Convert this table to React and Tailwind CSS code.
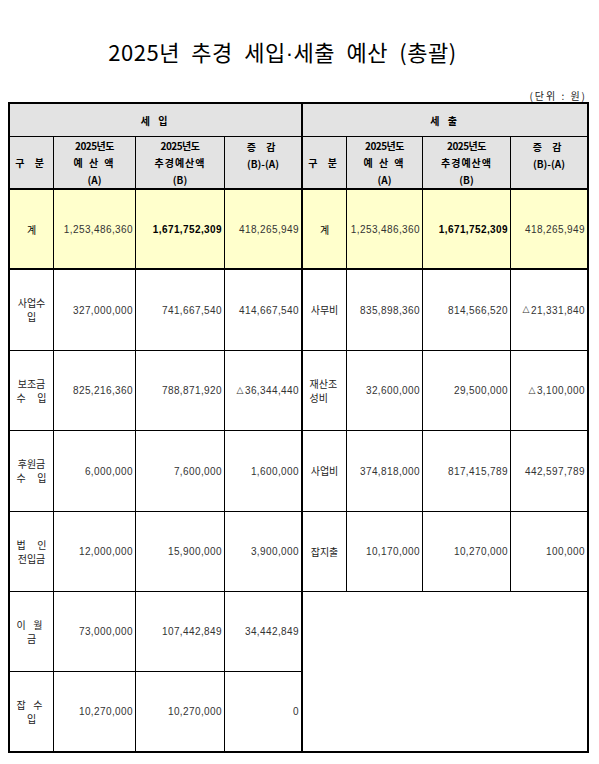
import React from "react";

const KR = { fontFamily: '"Noto Sans CJK KR", "Noto Sans", sans-serif' };
const NUM = { fontFamily: '"Liberation Sans", "Noto Sans CJK KR", sans-serif' };
const TRI = { fontFamily: '"DejaVu Sans", sans-serif' };

function Head({ className, lines }) {
  return (
    <div className={`flex flex-col items-center justify-center bg-[#e3e3e3] text-[10px] font-bold leading-[17px] text-black ${className}`} style={KR}>
      {lines.map((l, i) => (
        <div key={i} className={l.cls || ""}>{l.t}</div>
      ))}
    </div>
  );
}

function Label({ className, lines, align = "center", narrow }) {
  return (
    <div className={`flex items-center justify-center text-[10px] leading-[14px] text-[#222] ${className}`} style={KR}>
      <div className="flex w-[30px] flex-col">
        {lines.map((l, i) => {
          if (Array.isArray(l)) {
            return (
              <div key={i} className={narrow ? "flex justify-between pr-[4px]" : "flex justify-between"}>
                {l.map((c, j) => <span key={j}>{c}</span>)}
              </div>
            );
          }
          return (
            <div key={i} className={align === "left" ? "text-left whitespace-nowrap" : "text-center whitespace-nowrap"}>{l}</div>
          );
        })}
      </div>
    </div>
  );
}

function Num({ className, v, bold }) {
  const neg = v.startsWith("△");
  const body = neg ? v.slice(1) : v;
  return (
    <div className={`flex items-center justify-end pr-[2px] text-[10px] tracking-[0.4px] ${bold ? "font-bold text-black" : "text-[#333]"} ${className}`} style={NUM}>
      {neg && <span className="mr-[1px] text-[9px]" style={TRI}>△</span>}
      <span>{body}</span>
    </div>
  );
}

const leftRows = [
  { label: ["사업수", "입"], a: "327,000,000", b: "741,667,540", c: "414,667,540" },
  { label: ["보조금", ["수", "입"]], a: "825,216,360", b: "788,871,920", c: "△36,344,440" },
  { label: ["후원금", ["수", "입"]], a: "6,000,000", b: "7,600,000", c: "1,600,000" },
  { label: [["법", "인"], "전입금"], a: "12,000,000", b: "15,900,000", c: "3,900,000" },
  { label: [["이", "월"], "금"], narrow: true, a: "73,000,000", b: "107,442,849", c: "34,442,849" },
  { label: [["잡", "수"], "입"], narrow: true, a: "10,270,000", b: "10,270,000", c: "0" },
];

const rightRows = [
  { label: ["사무비"], a: "835,898,360", b: "814,566,520", c: "△21,331,840" },
  { label: ["재산조", "성비"], align: "left", a: "32,600,000", b: "29,500,000", c: "△3,100,000" },
  { label: ["사업비"], a: "374,818,000", b: "817,415,789", c: "442,597,789" },
  { label: ["잡지출"], a: "10,170,000", b: "10,270,000", c: "100,000" },
];

export default function App() {
  const cells = [];
  cells.push(<Head key="h1" className="col-span-4 border-r-2 border-b border-black tracking-[3px]" lines={[{ t: "세 입" }]} />);
  cells.push(<Head key="h2" className="col-span-4 border-b border-black tracking-[3px]" lines={[{ t: "세 출" }]} />);
  ["L", "R"].forEach((s) => {
    const last = s === "R";
    cells.push(<Head key={s + "g"} className="border-r border-b-2 border-black" lines={[{ t: "구 분", cls: "tracking-[4px]" }]} />);
    cells.push(<Head key={s + "a"} className="border-r border-b-2 border-black" lines={[{ t: "2025년도", cls: "tracking-[-0.5px]" }, { t: "예 산 액", cls: "tracking-[2px]" }, { t: "(A)" }]} />);
    cells.push(<Head key={s + "b"} className="border-r border-b-2 border-black" lines={[{ t: "2025년도", cls: "tracking-[-0.5px]" }, { t: "추경예산액", cls: "tracking-[1px]" }, { t: "(B)" }]} />);
    cells.push(<Head key={s + "c"} className={last ? "border-b-2 border-black pb-[15px]" : "border-r-2 border-b-2 border-black pb-[15px]"} lines={[{ t: "증 감", cls: "tracking-[4px]" }, { t: "(B)-(A)" }]} />);
  });
  ["L", "R"].forEach((s) => {
    const last = s === "R";
    cells.push(
      <div key={s + "t"} className="flex items-center justify-center border-r border-b-2 border-black bg-[#ffffcc] text-[10px] text-black" style={KR}>계</div>
    );
    cells.push(<Num key={s + "ta"} className="border-r border-b-2 border-black bg-[#ffffcc]" v="1,253,486,360" />);
    cells.push(<Num key={s + "tb"} className="border-r border-b-2 border-black bg-[#ffffcc]" v="1,671,752,309" bold />);
    cells.push(<Num key={s + "tc"} className={last ? "border-b-2 border-black bg-[#ffffcc]" : "border-r-2 border-b-2 border-black bg-[#ffffcc]"} v="418,265,949" />);
  });
  leftRows.forEach((r, i) => {
    const lastRow = i === leftRows.length - 1;
    const b = lastRow ? "" : "border-b";
    cells.push(<Label key={"l" + i} className={`border-r border-black ${b}`} lines={r.label} narrow={r.narrow} />);
    cells.push(<Num key={"la" + i} className={`border-r border-black ${b}`} v={r.a} />);
    cells.push(<Num key={"lb" + i} className={`border-r border-black ${b}`} v={r.b} />);
    cells.push(<Num key={"lc" + i} className={`border-r-2 border-black ${b}`} v={r.c} />);
    if (i < rightRows.length) {
      const rr = rightRows[i];
      cells.push(<Label key={"r" + i} className="border-r border-b border-black" lines={rr.label} align={rr.align} />);
      cells.push(<Num key={"ra" + i} className="border-r border-b border-black" v={rr.a} />);
      cells.push(<Num key={"rb" + i} className="border-r border-b border-black" v={rr.b} />);
      cells.push(<Num key={"rc" + i} className="border-b border-black" v={rr.c} />);
    } else if (i === rightRows.length) {
      cells.push(<div key="empty" className="col-span-4 row-span-2 bg-white" />);
    }
  });

  return (
    <div className="min-h-[764px] w-[599px] bg-white" style={KR}>
      <div className="flex justify-center pt-[36px] pr-[34px]">
        <div className="whitespace-nowrap text-[22px] leading-[31px] tracking-[0.5px] text-black [word-spacing:6px]" style={KR}>
          2025년 추경 세입<span style={NUM}>·</span>세출 예산 (총괄)
        </div>
      </div>
      <div className="mt-[20px] flex h-[13px] justify-end pr-[12px] text-[10px] leading-[13px] tracking-[2px] text-[#222]" style={KR}>
        (단위 : 원)
      </div>
      <div className="ml-[8px] w-[581px] border-2 border-black">
        <div className="grid grid-cols-[44px_82px_89px_78px_44px_76px_88px_76px] grid-rows-[33px_53px_80px_81px_80px_81px_80px_80px_79px]">
          {cells}
        </div>
      </div>
    </div>
  );
}
